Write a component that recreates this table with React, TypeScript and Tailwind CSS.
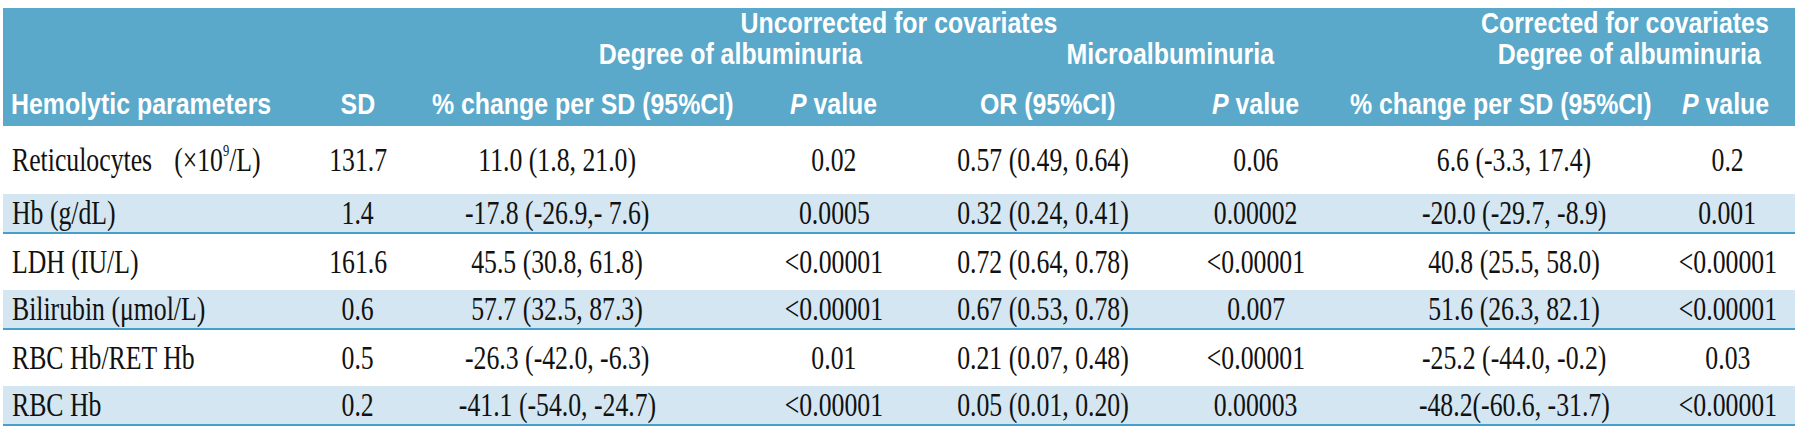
import React from "react"

const head = "font-['Liberation_Sans',Arial,sans-serif] font-bold text-white text-[30px] leading-none"
const body = "font-['Liberation_Serif','Times_New_Roman',serif] text-[#111] text-[33px] leading-none"

type Origin = "left" | "center" | "right"
const justifyOf = (o: Origin) => (o === "left" ? "justify-start" : o === "right" ? "justify-end" : "justify-center")
const originOf = (o: Origin) => (o === "left" ? "origin-left" : o === "right" ? "origin-right" : "origin-center")

// text is squeezed sideways, like the condensed faces of the print original;
// flex keeps wide labels centred even when they overflow their column
function H({ children, o = "center" }: { children: React.ReactNode; o?: Origin }) {
  return (
    <div className={`flex ${justifyOf(o)}`}>
      <span className={`whitespace-nowrap scale-x-[0.83] ${originOf(o)}`}>{children}</span>
    </div>
  )
}

function B({ children, o = "center" }: { children: React.ReactNode; o?: Origin }) {
  return (
    <div className={`flex ${justifyOf(o)}`}>
      <span className={`whitespace-nowrap scale-x-[0.78] ${originOf(o)}`}>{children}</span>
    </div>
  )
}

const PVal = () => (
  <>
    <i>P</i> value
  </>
)

type Row = {
  name: React.ReactNode
  sd: string
  ch: string
  p: string
  or: string
  p2: string
  ch2: string
  p3: string
}

const rows: Row[] = [
  {
    name: (
      <>
        Reticulocytes <span className="ml-5">(×10<sup className="text-[16px] -top-[0.9em]">9</sup>/L)</span>
      </>
    ),
    sd: "131.7",
    ch: "11.0 (1.8, 21.0)",
    p: "0.02",
    or: "0.57 (0.49, 0.64)",
    p2: "0.06",
    ch2: "6.6 (-3.3, 17.4)",
    p3: "0.2",
  },
  { name: "Hb (g/dL)", sd: "1.4", ch: "-17.8 (-26.9,- 7.6)", p: "0.0005", or: "0.32 (0.24, 0.41)", p2: "0.00002", ch2: "-20.0 (-29.7, -8.9)", p3: "0.001" },
  { name: "LDH (IU/L)", sd: "161.6", ch: "45.5 (30.8, 61.8)", p: "<0.00001", or: "0.72 (0.64, 0.78)", p2: "<0.00001", ch2: "40.8 (25.5, 58.0)", p3: "<0.00001" },
  { name: "Bilirubin (μmol/L)", sd: "0.6", ch: "57.7 (32.5, 87.3)", p: "<0.00001", or: "0.67 (0.53, 0.78)", p2: "0.007", ch2: "51.6 (26.3, 82.1)", p3: "<0.00001" },
  { name: "RBC Hb/RET Hb", sd: "0.5", ch: "-26.3 (-42.0, -6.3)", p: "0.01", or: "0.21 (0.07, 0.48)", p2: "<0.00001", ch2: "-25.2 (-44.0, -0.2)", p3: "0.03" },
  { name: "RBC Hb", sd: "0.2", ch: "-41.1 (-54.0, -24.7)", p: "<0.00001", or: "0.05 (0.01, 0.20)", p2: "0.00003", ch2: "-48.2(-60.6, -31.7)", p3: "<0.00001" },
]

export default function App() {
  return (
    <div className="w-[1800px] h-[429px] bg-white pt-2 pl-[3px]">
      <table className="table-fixed border-collapse w-[1792px]">
        <colgroup>
          <col className="w-[287px]" />
          <col className="w-[136px]" />
          <col className="w-[270px]" />
          <col className="w-[276px]" />
          <col className="w-[168px]" />
          <col className="w-[232px]" />
          <col className="w-[308px]" />
          <col className="w-[115px]" />
        </colgroup>
        <thead className={`bg-[#5aa8ca] ${head}`}>
          <tr className="h-[28px]">
            <th colSpan={2} className="p-0" />
            <th colSpan={4} className="p-0 align-middle">
              <H>Uncorrected for covariates</H>
            </th>
            <th colSpan={2} className="p-0 pr-[26px] align-middle">
              <H o="right">Corrected for covariates</H>
            </th>
          </tr>
          <tr className="h-[32px]">
            <th colSpan={2} className="p-0" />
            <th colSpan={2} className="p-0 pr-[110px] align-middle">
              <H o="right">Degree of albuminuria</H>
            </th>
            <th colSpan={2} className="p-0 pr-[98px] align-middle">
              <H o="right">Microalbuminuria</H>
            </th>
            <th colSpan={2} className="p-0 pr-[34px] align-middle">
              <H o="right">Degree of albuminuria</H>
            </th>
          </tr>
          <tr className="h-[56px]">
            <th className="p-0 pl-2 pb-[7px] align-bottom">
              <H o="left">Hemolytic parameters</H>
            </th>
            <th className="p-0 pb-[7px] align-bottom">
              <H>SD</H>
            </th>
            <th className="p-0 pl-[44px] pb-[7px] align-bottom">
              <H>% change per SD (95%CI)</H>
            </th>
            <th className="p-0 pb-[7px] align-bottom">
              <H>
                <PVal />
              </H>
            </th>
            <th className="p-0 pr-4 pb-[7px] align-bottom">
              <H>OR (95%CI)</H>
            </th>
            <th className="p-0 pb-[7px] align-bottom">
              <H>
                <PVal />
              </H>
            </th>
            <th className="p-0 pr-[50px] pb-[7px] align-bottom">
              <H>% change per SD (95%CI)</H>
            </th>
            <th className="p-0 pr-[24px] pb-[7px] align-bottom">
              <H>
                <PVal />
              </H>
            </th>
          </tr>
        </thead>
        <tbody className={body}>
          {rows.map((r, i) => {
            const shaded = i % 2 === 1
            const h = i === 0 ? "h-[68px]" : shaded ? "h-[39px]" : "h-[57px]"
            return (
              <tr key={i} className={`${h} ${shaded ? "bg-[#d3e6f2] border-b-2 border-[#45a1cb]" : ""}`}>
                <td className="p-0 pl-[9px] align-middle">
                  <B o="left">{r.name}</B>
                </td>
                <td className="p-0 align-middle">
                  <B>{r.sd}</B>
                </td>
                <td className="p-0 pr-2 align-middle">
                  <B>{r.ch}</B>
                </td>
                <td className="p-0 align-middle">
                  <B>{r.p}</B>
                </td>
                <td className="p-0 pr-[26px] align-middle">
                  <B>{r.or}</B>
                </td>
                <td className="p-0 align-middle">
                  <B>{r.p2}</B>
                </td>
                <td className="p-0 pr-[24px] align-middle">
                  <B>{r.ch2}</B>
                </td>
                <td className="p-0 pr-[20px] align-middle">
                  <B>{r.p3}</B>
                </td>
              </tr>
            )
          })}
        </tbody>
      </table>
    </div>
  )
}
